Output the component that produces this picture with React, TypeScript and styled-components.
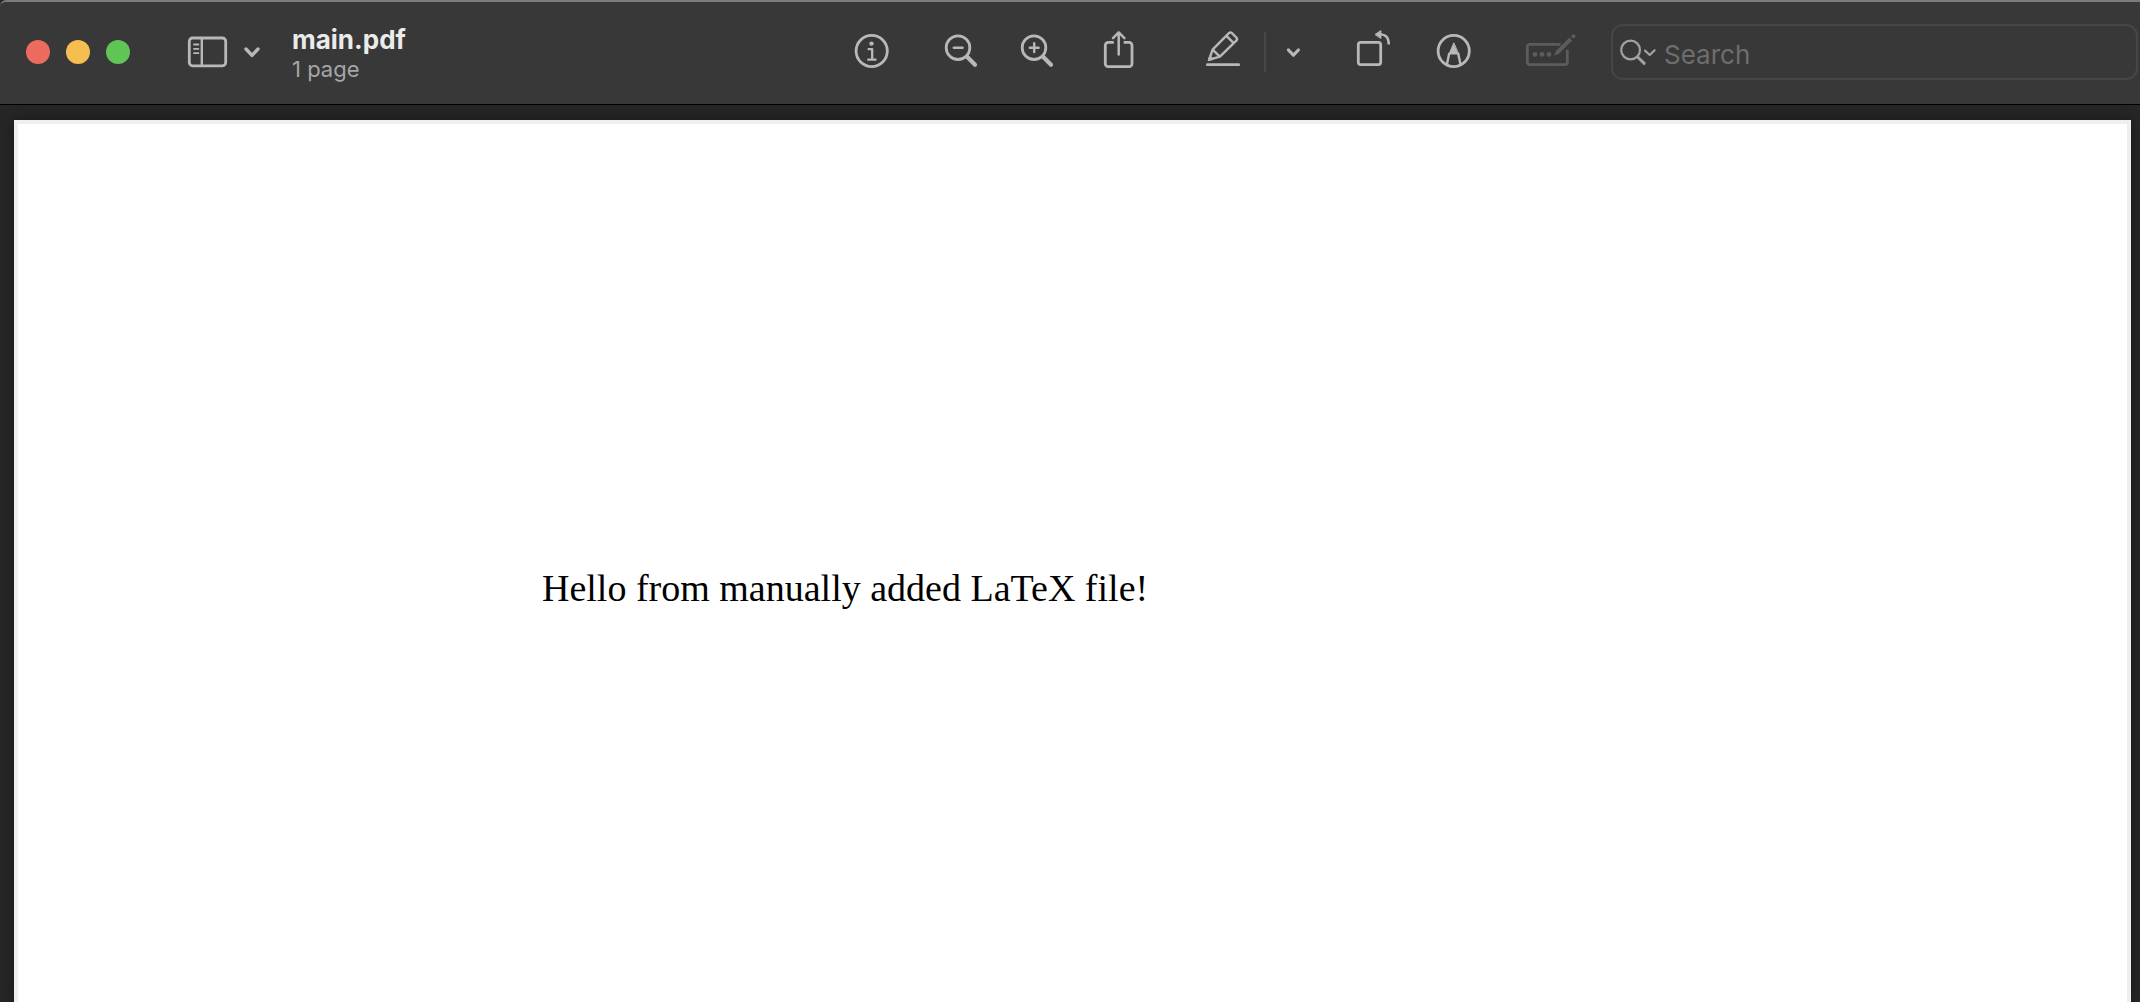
import React from "react";
import styled, { createGlobalStyle } from "styled-components";

const GlobalStyle = createGlobalStyle`
  * { box-sizing: border-box; }
  body {
    margin: 0;
    background: #262626;
    font-family: Inter, "Liberation Sans", sans-serif;
  }
`;

const Window = styled.div`
  display: flex;
  flex-direction: column;
  min-height: 100vh;
`;

const Toolbar = styled.header`
  display: flex;
  align-items: center;
  height: 105px;
  padding: 0 2px 2px 26px;
  background: #383838;
  border-top: 2px solid #7b7b7b;
  border-bottom: 1px solid #000;
  border-top-left-radius: 6px;
`;

const Lights = styled.div`
  display: flex;
  gap: 16px;
  margin-right: 54px;
`;

const Light = styled.button<{ $color: string }>`
  width: 24px;
  height: 24px;
  padding: 0;
  border: 0;
  border-radius: 50%;
  background: ${(p) => p.$color};
`;

const ToolButton = styled.button<{ $width?: number; $before?: number }>`
  flex: none;
  width: ${(p) => p.$width ?? 48}px;
  height: 48px;
  margin: 0 0 0 ${(p) => p.$before ?? 0}px;
  padding: 0;
  border: 0;
  background: none;
  color: #b8b8b8;

  &:disabled {
    color: #5c5c5c;
  }
`;

const Glyph = styled.svg`
  display: block;
  width: 100%;
  height: 48px;
  fill: none;
  stroke: currentColor;
  stroke-width: 2.8;
  stroke-linecap: round;
  stroke-linejoin: round;
`;

const TitleBlock = styled.div`
  flex: 0 1 555px;
  min-width: 130px;
  margin-left: 28px;
  padding-top: 1px;
`;

const Title = styled.h1`
  margin: 0;
  font-size: 26px;
  line-height: 32px;
  font-weight: 700;
  color: #ebebeb;
`;

const Subtitle = styled.p`
  margin: 0;
  font-size: 22px;
  line-height: 26px;
  color: #a6a6a6;
`;

const Tools = styled.div`
  display: flex;
  align-items: center;
  flex: none;
`;

const Divider = styled.span`
  width: 2px;
  height: 40px;
  margin-left: 17px;
  background: #474747;
`;

const SearchField = styled.label`
  display: flex;
  align-items: center;
  flex: 1 1 200px;
  min-width: 0;
  height: 56px;
  margin-left: 28px;
  padding-left: 3px;
  border: 2px solid #464646;
  border-radius: 12px;
  color: #a2a2a2;
`;

const SearchGlyph = styled(Glyph)`
  flex: none;
  width: 48px;
`;

const SearchInput = styled.input`
  flex: 1;
  min-width: 0;
  padding: 6px 0 0;
  border: 0;
  outline: 0;
  background: none;
  color: #ebebeb;
  font-family: inherit;
  font-size: 26px;
  line-height: 32px;

  &::placeholder {
    color: #6e6e6e;
    opacity: 1;
  }
`;

const Canvas = styled.main`
  display: flex;
  flex: 1;
  padding: 15px 9px 0 14px;
`;

const Paper = styled.article`
  flex: 1;
  padding: 440px 24px 24px 524px;
  background: #fff;
  border: 4px solid #efefef;
  border-bottom: 0;
  box-shadow: 0 0 12px rgba(0, 0, 0, 0.4);
`;

const Line = styled.p`
  margin: 0;
  font-family: "Liberation Serif", serif;
  font-size: 38px;
  line-height: 48px;
  color: #000;
`;

function ZoomGlyph({ plus = false }: { plus?: boolean }) {
  return (
    <Glyph viewBox="0 0 48 48">
      <circle cx="21" cy="19.7" r="11.8" />
      <path d="M30.3 29 38 36.8" strokeWidth="4.2" />
      <path d={plus ? "M16.8 19.7h8.8M21.2 15.3v8.8" : "M16.8 19.7h8.8"} strokeWidth="2.4" />
    </Glyph>
  );
}

export default function App() {
  return (
    <Window>
      <GlobalStyle />
      <Toolbar>
        <Lights>
          <Light $color="#ed6a5f" aria-label="Close" />
          <Light $color="#f6be50" aria-label="Minimize" />
          <Light $color="#61c555" aria-label="Full screen" />
        </Lights>
        <ToolButton aria-label="Sidebar">
          <Glyph viewBox="0 0 48 48">
            <rect x="5.3" y="10" width="36.4" height="27.8" rx="3.2" />
            <path d="M17.8 10v27.8" strokeWidth="2.4" />
            <path d="M10 16.5h4.4M10 20.9h4.4M10 25.2h4.4" strokeWidth="1.8" />
          </Glyph>
        </ToolButton>
        <ToolButton $width={24} $before={8} aria-label="Sidebar options">
          <Glyph viewBox="0 0 24 48">
            <path d="m6 21 6 6.4 6-6.4" strokeWidth="3.4" />
          </Glyph>
        </ToolButton>
        <TitleBlock>
          <Title>main.pdf</Title>
          <Subtitle>1 page</Subtitle>
        </TitleBlock>
        <Tools>
          <ToolButton aria-label="Info">
            <Glyph viewBox="0 0 48 48">
              <circle cx="24.7" cy="23" r="15.6" />
              <circle cx="24.5" cy="15.6" r="2.2" fill="currentColor" stroke="none" />
              <path d="M21.6 21.2h3.6v10.4M21.2 31.7h7.4" strokeWidth="2.3" />
            </Glyph>
          </ToolButton>
          <ToolButton $before={42} aria-label="Zoom out">
            <ZoomGlyph />
          </ToolButton>
          <ToolButton $before={28} aria-label="Zoom in">
            <ZoomGlyph plus />
          </ToolButton>
          <ToolButton $before={34} aria-label="Share">
            <Glyph viewBox="0 0 48 48">
              <path
                d="M18.8 14.3H13.2a2.9 2.9 0 0 0-2.9 2.9v18.6a2.9 2.9 0 0 0 2.9 2.9h20.9a2.9 2.9 0 0 0 2.9-2.9V17.2a2.9 2.9 0 0 0-2.9-2.9h-5.4"
                strokeLinecap="butt"
              />
              <path d="M23.7 4.6v21.8M18 10.1l5.7-5.7 5.7 5.7" strokeWidth="2.5" />
            </Glyph>
          </ToolButton>
          <ToolButton $before={56} aria-label="Highlight">
            <Glyph viewBox="0 0 48 48">
              <path d="M8.3 36.7h31.4" />
              <path
                d="M10.2 31.6 13.6 21.6 29.9 5.2a2.2 2.2 0 0 1 3.1 0l4.3 4.3a2.2 2.2 0 0 1 0 3.1L20.9 28.6ZM13.6 21.6l7.3 7M27.4 7.8l7.3 7.3"
                strokeWidth="2.4"
              />
              <path d="m9.2 32.4 1.7-4.6 3.4 3.2Z" fill="currentColor" strokeWidth="1" />
            </Glyph>
          </ToolButton>
          <Divider />
          <ToolButton $width={24} $before={16} aria-label="Highlight options">
            <Glyph viewBox="0 0 24 48">
              <path d="m6.4 22 5 5.2 5-5.2" strokeWidth="3.2" />
            </Glyph>
          </ToolButton>
          <ToolButton $before={43} aria-label="Rotate">
            <Glyph viewBox="0 0 48 48">
              <rect x="9.3" y="14.3" width="22.4" height="22.4" rx="2.4" />
              <path d="M31 6.4c5.4 0 8.8 2.8 8.8 10" strokeWidth="2.4" strokeLinecap="butt" />
              <path d="m26.3 6.3 5.6-3.7v7.6Z" fill="currentColor" strokeWidth="1" />
            </Glyph>
          </ToolButton>
          <ToolButton $before={32} aria-label="Markup">
            <Glyph viewBox="0 0 48 48">
              <circle cx="24.7" cy="23" r="15.6" />
              <path d="M24.7 15.2 20 26h9.4Z" fill="currentColor" strokeWidth="1" />
              <path d="m20.3 25-2.4 11.6M29.1 25l2.4 11.6" strokeWidth="2.4" strokeLinecap="butt" />
            </Glyph>
          </ToolButton>
          <ToolButton $width={64} $before={42} disabled aria-label="Form filling">
            <Glyph viewBox="0 0 64 48">
              <path
                d="M41.5 16.3H11a2.7 2.7 0 0 0-2.7 2.7v15a2.7 2.7 0 0 0 2.7 2.7h34.6a2.7 2.7 0 0 0 2.7-2.7V21.8"
                strokeLinecap="butt"
              />
              <g fill="currentColor" stroke="none">
                <circle cx="16" cy="26.4" r="2.4" />
                <circle cx="23" cy="26.4" r="2.4" />
                <circle cx="30" cy="26.4" r="2.4" />
                <path d="m35 27.8 2-4.8L50.4 9.6l2.8 2.8L39.8 25.8Z" />
                <circle cx="54.4" cy="8.3" r="2" />
              </g>
            </Glyph>
          </ToolButton>
        </Tools>
        <SearchField>
          <SearchGlyph viewBox="0 0 48 48" aria-hidden="true">
            <circle cx="14.6" cy="22" r="9.4" strokeWidth="2.2" />
            <path d="m21.6 29 6.6 6.4" strokeWidth="3" />
            <path d="m29 22.6 4.7 4.4 4.9-4.8" strokeWidth="2.2" />
          </SearchGlyph>
          <SearchInput type="search" placeholder="Search" aria-label="Search" />
        </SearchField>
      </Toolbar>
      <Canvas>
        <Paper>
          <Line>Hello from manually added LaTeX file!</Line>
        </Paper>
      </Canvas>
    </Window>
  );
}
